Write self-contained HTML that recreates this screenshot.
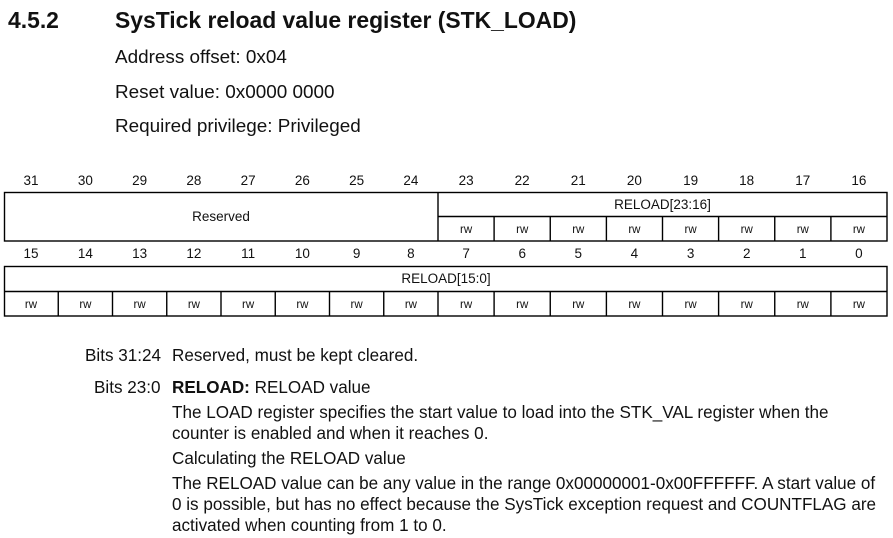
<!DOCTYPE html>
<html><head><meta charset="utf-8"><style>
body{margin:0;width:893px;height:538px;background:#fff;position:relative;overflow:hidden;font-family:"Liberation Sans",Arial,sans-serif;color:#111}
.a{position:absolute;white-space:nowrap;line-height:1.15}
.h{font-size:22.9px;font-weight:bold;top:7px}
.b{font-size:18.9px;left:115px}
.t{font-size:17.1px}
svg{position:absolute;left:0;top:0}
svg text{font-family:"Liberation Sans",Arial,sans-serif;fill:#111}
</style></head><body>
<div class="a h" style="left:8px">4.5.2</div>
<div class="a h" style="left:115px">SysTick reload value register (STK_LOAD)</div>
<div class="a b" style="top:47px">Address offset: 0x04</div>
<div class="a b" style="top:82px">Reset value: 0x0000 0000</div>
<div class="a b" style="top:116px">Required privilege: Privileged</div>

<svg width="893" height="538" viewBox="0 0 893 538">
<g stroke="#000" stroke-width="1.4" fill="none">
<rect x="4.5" y="192.5" width="882.5" height="48.5"/>
<line x1="438" y1="192" x2="438" y2="241"/>
<line x1="438" y1="216.5" x2="887" y2="216.5"/>
<line x1="494.1" y1="216" x2="494.1" y2="241"/><line x1="550.25" y1="216" x2="550.25" y2="241"/><line x1="606.4" y1="216" x2="606.4" y2="241"/><line x1="662.5" y1="216" x2="662.5" y2="241"/><line x1="718.6" y1="216" x2="718.6" y2="241"/><line x1="774.75" y1="216" x2="774.75" y2="241"/><line x1="830.9" y1="216" x2="830.9" y2="241"/>
<rect x="4.5" y="266.5" width="882.5" height="49.5"/>
<line x1="4" y1="291.5" x2="887" y2="291.5"/>
<line x1="58.25" y1="291" x2="58.25" y2="316"/><line x1="112.5" y1="291" x2="112.5" y2="316"/><line x1="166.75" y1="291" x2="166.75" y2="316"/><line x1="221" y1="291" x2="221" y2="316"/><line x1="275.25" y1="291" x2="275.25" y2="316"/><line x1="329.5" y1="291" x2="329.5" y2="316"/><line x1="383.75" y1="291" x2="383.75" y2="316"/><line x1="438" y1="291" x2="438" y2="316"/><line x1="494.1" y1="291" x2="494.1" y2="316"/><line x1="550.25" y1="291" x2="550.25" y2="316"/><line x1="606.4" y1="291" x2="606.4" y2="316"/><line x1="662.5" y1="291" x2="662.5" y2="316"/><line x1="718.6" y1="291" x2="718.6" y2="316"/><line x1="774.75" y1="291" x2="774.75" y2="316"/><line x1="830.9" y1="291" x2="830.9" y2="316"/>
</g>
<g font-size="13.5" text-anchor="middle">
<text x="31" y="185">31</text><text x="85.4" y="185">30</text><text x="139.6" y="185">29</text><text x="193.9" y="185">28</text><text x="248.1" y="185">27</text><text x="302.4" y="185">26</text><text x="356.6" y="185">25</text><text x="410.9" y="185">24</text>
<text x="466.1" y="185">23</text><text x="522.2" y="185">22</text><text x="578.3" y="185">21</text><text x="634.4" y="185">20</text><text x="690.6" y="185">19</text><text x="746.7" y="185">18</text><text x="802.8" y="185">17</text><text x="858.9" y="185">16</text>
<text x="31" y="258">15</text><text x="85.4" y="258">14</text><text x="139.6" y="258">13</text><text x="193.9" y="258">12</text><text x="248.1" y="258">11</text><text x="302.4" y="258">10</text><text x="356.6" y="258">9</text><text x="410.9" y="258">8</text>
<text x="466.1" y="258">7</text><text x="522.2" y="258">6</text><text x="578.3" y="258">5</text><text x="634.4" y="258">4</text><text x="690.6" y="258">3</text><text x="746.7" y="258">2</text><text x="802.8" y="258">1</text><text x="858.9" y="258">0</text>
<text x="221" y="221">Reserved</text>
<text x="662.5" y="209">RELOAD[23:16]</text>
<text x="446" y="283">RELOAD[15:0]</text>
</g>
<g font-size="11.5" text-anchor="middle">
<text x="466.1" y="233">rw</text><text x="522.2" y="233">rw</text><text x="578.3" y="233">rw</text><text x="634.4" y="233">rw</text><text x="690.6" y="233">rw</text><text x="746.7" y="233">rw</text><text x="802.8" y="233">rw</text><text x="858.9" y="233">rw</text>
<text x="31" y="308">rw</text><text x="85.4" y="308">rw</text><text x="139.6" y="308">rw</text><text x="193.9" y="308">rw</text><text x="248.1" y="308">rw</text><text x="302.4" y="308">rw</text><text x="356.6" y="308">rw</text><text x="410.9" y="308">rw</text>
<text x="466.1" y="308">rw</text><text x="522.2" y="308">rw</text><text x="578.3" y="308">rw</text><text x="634.4" y="308">rw</text><text x="690.6" y="308">rw</text><text x="746.7" y="308">rw</text><text x="802.8" y="308">rw</text><text x="858.9" y="308">rw</text>
</g>
</svg>

<div class="a t" style="left:85px;top:346px">Bits 31:24</div>
<div class="a t" style="left:172px;top:346px">Reserved, must be kept cleared.</div>
<div class="a t" style="left:94px;top:378px">Bits 23:0</div>
<div class="a t" style="left:172px;top:378px"><b>RELOAD:</b> RELOAD value</div>
<div class="a t" style="left:172px;top:403px">The LOAD register specifies the start value to load into the STK_VAL register when the</div>
<div class="a t" style="left:172px;top:424px">counter is enabled and when it reaches 0.</div>
<div class="a t" style="left:172px;top:449px">Calculating the RELOAD value</div>
<div class="a t" style="left:172px;top:474px">The RELOAD value can be any value in the range 0x00000001-0x00FFFFFF. A start value of</div>
<div class="a t" style="left:172px;top:495px">0 is possible, but has no effect because the SysTick exception request and COUNTFLAG are</div>
<div class="a t" style="left:172px;top:516px">activated when counting from 1 to 0.</div>
</body></html>
